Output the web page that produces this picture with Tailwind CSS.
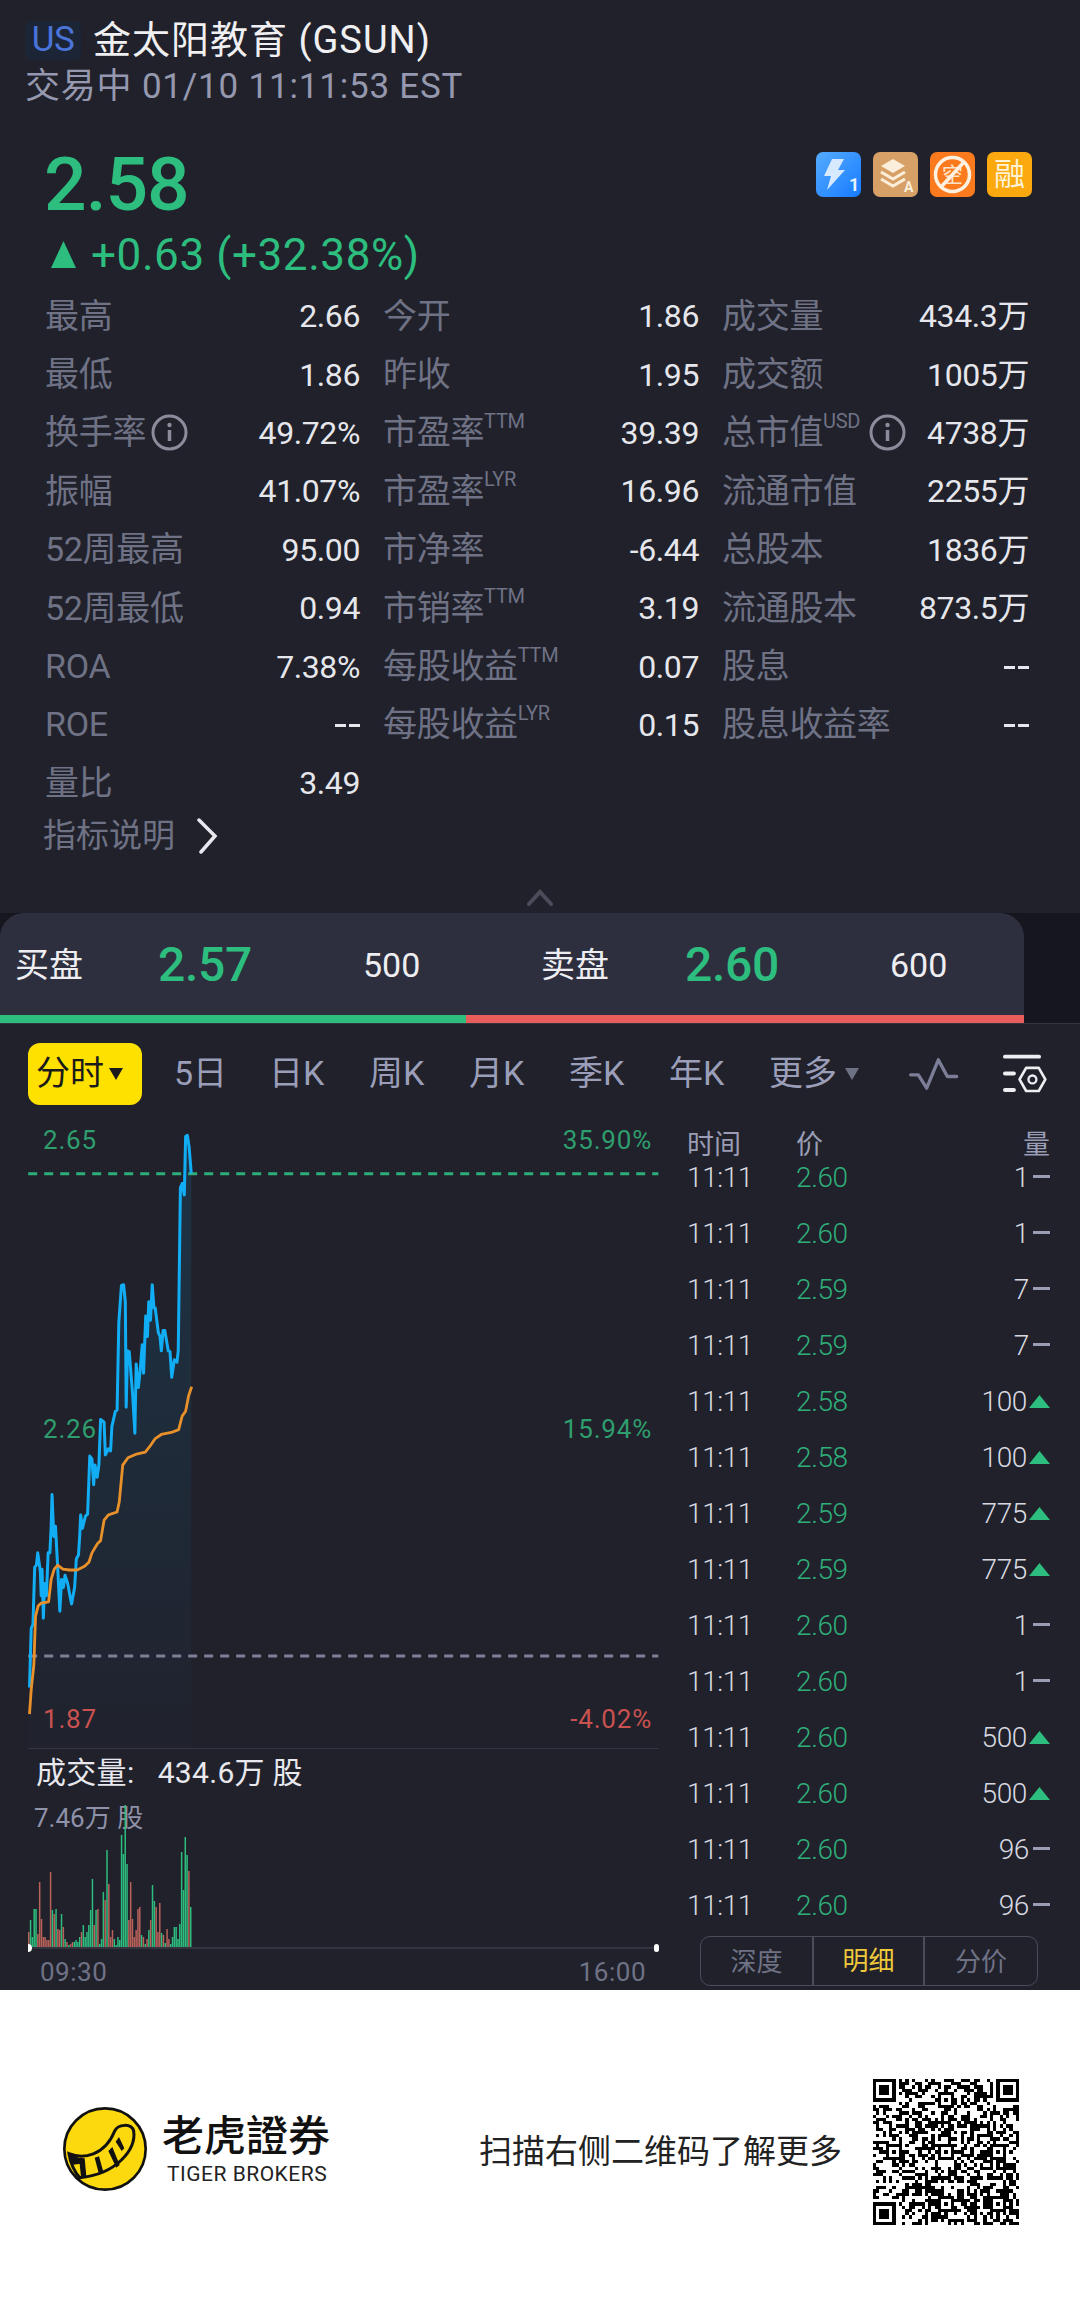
<!DOCTYPE html>
<html lang="zh">
<head>
  <meta charset="UTF-8" />
  <meta name="viewport" content="width=device-width, initial-scale=1.0"/>
  <title>金太阳教育 (GSUN)</title>
  <script src="https://cdn.jsdelivr.net/npm/@tailwindcss/browser@4"></script>
</head>
<body class="w-[1080px] h-[2313px] overflow-hidden bg-[#20212b] font-['Roboto','Noto_Sans_CJK_SC',sans-serif]">

  <!-- Header -->
  <header class="h-[130px] pt-[21px] pl-[25px]">
    <div class="flex items-center h-[39px]">
      <span class="w-[56px] h-[39px] flex items-center justify-center rounded-[6px] bg-[#1c2536] text-[#4a74d9] text-[35px] tracking-[-0.5px]">US</span>
      <span class="ml-[12px] text-[38px] tracking-[1px] text-[#f0f0f2]">金太阳教育 (GSUN)</span>
    </div>
    <div class="mt-[7px] text-[35px] leading-[40px] tracking-[0.8px] text-[#9598ae]">交易中 01/10 11:11:53 EST</div>
  </header>

  <!-- Price -->
  <section class="h-[157px] pl-[44px] pr-[48px] flex justify-between">
    <div class="text-[#2dbd7e]">
      <div class="text-[75px] leading-[84px] mt-[12px] font-medium tracking-[-1px]">2.58</div>
      <div class="flex items-center mt-[4px] h-[50px]">
        <svg width="27" height="28" viewBox="0 0 27 28" class="ml-[6px]"><path d="M13.500 0 L26 27 L1 27 Z" fill="#2dbd7e"/></svg>
        <span class="ml-[14px] text-[44px] tracking-[0.6px]">+0.63 (+32.38%)</span>
      </div>
    </div>
    <div class="flex gap-[12px] mt-[22px] h-[45px]">
      <svg width="45" height="45" viewBox="0 0 45 45"><defs><linearGradient id="tileBlue" x1="0" y1="0" x2="1" y2="1"><stop offset="0" stop-color="#55acff"/><stop offset="1" stop-color="#167aff"/></linearGradient></defs><rect width="45" height="45" rx="7" fill="url(#tileBlue)"/><path d="M16 7 L28 7 L22 18 L29 18 L11 38 L15 24 L8 24 Z" fill="#d6e9ff"/><text x="33" y="39" font-size="18" font-weight="700" fill="#e6f2ff" font-family="Roboto">1</text></svg>
      <svg width="45" height="45" viewBox="0 0 45 45"><rect width="45" height="45" rx="7" fill="#d6a066"/><path d="M20 7 L32 14 L20 21 L8 14 Z" fill="#fbeeda"/><path d="M8 20 L20 27 L32 20 M8 27 L20 34 L32 27" fill="none" stroke="#fbeeda" stroke-width="3"/><text x="31" y="40" font-size="14" font-weight="700" fill="#fbeeda" font-family="Roboto">A</text></svg>
      <svg width="45" height="45" viewBox="0 0 45 45"><rect width="45" height="45" rx="7" fill="#fb7a1e"/><text x="22.500" y="30" font-size="21" text-anchor="middle" fill="#fde3c8" font-family="Noto Sans CJK SC">空</text><circle cx="22.500" cy="22.500" r="17" fill="none" stroke="#fff1e0" stroke-width="3.500"/><path d="M11 35 L34 10" stroke="#fff1e0" stroke-width="3.500"/></svg>
      <div class="w-[45px] h-[45px] rounded-[7px] bg-[#fba90f] text-[#fff3d6] text-[31px] leading-[45px] text-center">融</div>
    </div>
  </section>

  <!-- Stats -->
  <section id="stats" class="pl-[45px] grid grid-cols-[315px_316px_307px] gap-x-[23px] auto-rows-[58.4px] h-[525px]"></section>

  <div class="h-[48px] pl-[43px] flex items-center">
    <span class="text-[33px] text-[#6f7285]">指标说明</span>
    <svg width="24" height="36" viewBox="0 0 24 36" class="ml-[20px]"><path d="M4 2 L20 18 L6 34" fill="none" stroke="#e8e8ee" stroke-width="3.500" stroke-linecap="round"/></svg>
  </div>

  <!-- Collapse arrow -->
  <div class="h-[53px] flex justify-center items-end pb-[7px]">
    <svg width="28" height="17" viewBox="0 0 28 17"><path d="M3 15 L14 3 L25 15" fill="none" stroke="#4a4c5a" stroke-width="4" stroke-linecap="round"/></svg>
  </div>

  <!-- Bid / ask -->
  <section class="h-[110px] bg-[#15161e] flex">
    <div class="w-[1024px] rounded-t-[24px] bg-[#2d2f3e] flex flex-col">
      <div class="flex-1 pt-[2px] flex items-center text-[#eeeef2] text-[34px]">
        <span class="ml-[15px] w-[143px]">买盘</span>
        <span class="w-[205px] text-[48px] font-medium text-[#2dbd7e] tracking-[-0.3px]">2.57</span>
        <span class="w-[178px]">500</span>
        <span class="w-[144px]">卖盘</span>
        <span class="w-[205px] text-[48px] font-medium text-[#2dbd7e] tracking-[-0.3px]">2.60</span>
        <span>600</span>
      </div>
      <div class="h-[8px] flex">
        <div class="w-[466px] bg-[#2dbd7e]"></div>
        <div class="flex-1 bg-[#e85c5c]"></div>
      </div>
    </div>
  </section>

  <!-- Period tabs -->
  <nav class="h-[87px] pt-[13px] border-t border-[#33343f] flex items-center pl-[28px] text-[34px] text-[#9b9eb8]">
    <div class="w-[114px] h-[62px] rounded-[12px] bg-[#ffe100] text-[#1a1a1a] flex items-center pl-[8px]">
      分时
      <svg width="14" height="12" viewBox="0 0 14 12" class="ml-[5px]"><path d="M0 0 H14 L7 12 Z" fill="#1a1a1a"/></svg>
    </div>
    <span class="ml-[32px] w-[95px]">5日</span>
    <span class="w-[100px]">日K</span>
    <span class="w-[100px]">周K</span>
    <span class="w-[100px]">月K</span>
    <span class="w-[100px]">季K</span>
    <span class="w-[100px]">年K</span>
    <span>更多</span>
    <svg width="14" height="12" viewBox="0 0 14 12" class="ml-[8px]"><path d="M0 0 H14 L7 12 Z" fill="#6f7285"/></svg>
    <svg width="50" height="32" viewBox="97 60 150 95" class="ml-[50px]"><path d="M102 110 H125 L150 150 L185 65 L212 115 H240" fill="none" stroke="#7b7e96" stroke-width="10" stroke-linecap="round" stroke-linejoin="round"/></svg>
    <svg width="47" height="43" viewBox="370 40 140 130" class="ml-[42px]"><path d="M381 54 H484 M381 105 H408 M381 155 H408" stroke="#eeeef2" stroke-width="12" stroke-linecap="round"/><path d="M425 123 L445 88 H483 L503 123 L483 158 H445 Z" fill="none" stroke="#eeeef2" stroke-width="8" stroke-linejoin="round"/><circle cx="464" cy="123" r="12" fill="none" stroke="#eeeef2" stroke-width="7"/></svg>
  </nav>

  <!-- Chart and trade ticks -->
  <main class="h-[880px] flex">
    <div class="w-[670px] shrink-0">
      <div class="relative h-[638px]">
        <svg width="680" height="640" viewBox="0 0 1568 1568" preserveAspectRatio="none" class="absolute left-0 top-0">
          <defs><linearGradient id="areaFill" x1="0" y1="0" x2="0" y2="1"><stop offset="0" stop-color="#0ea5e9" stop-opacity="0.14"/><stop offset="1" stop-color="#0ea5e9" stop-opacity="0.01"/></linearGradient></defs>
          <polygon id="area" fill="url(#areaFill)"/>
          <path d="M65 156 H1518" stroke="#2fae7a" stroke-width="3" stroke-dasharray="9 7" vector-effect="non-scaling-stroke"/>
          <path d="M65 1338 H1518" stroke="#7d7f96" stroke-width="3" stroke-dasharray="9 7" vector-effect="non-scaling-stroke"/>
          <polyline id="priceLine" fill="none" stroke="#12aef5" stroke-width="3" stroke-linejoin="round" vector-effect="non-scaling-stroke"/>
          <polyline points="68,1480 72,1420 78,1360 82,1240 88,1215 95,1208 112,1205 118,1150 125,1125 133,1115 145,1125 160,1127 178,1127 195,1118 205,1108 212,1085 225,1062 232,1055 240,1005 250,992 270,985 275,960 283,870 295,852 315,843 335,838 345,825 358,805 372,795 395,790 412,783 420,750 428,738 435,700 442,678" fill="none" stroke="#e8912a" stroke-width="2.800" stroke-linejoin="round" vector-effect="non-scaling-stroke"/>
        </svg>
        <span class="absolute left-[43px] top-[15px] text-[26px] leading-[30px] tracking-[0.8px] text-[#2f9e6e]">2.65</span>
        <span class="absolute right-[18px] top-[15px] text-[26px] leading-[30px] tracking-[0.8px] text-[#2f9e6e]">35.90%</span>
        <span class="absolute left-[43px] top-[304px] text-[26px] leading-[30px] tracking-[0.8px] text-[#2f9e6e]">2.26</span>
        <span class="absolute right-[18px] top-[304px] text-[26px] leading-[30px] tracking-[0.8px] text-[#2f9e6e]">15.94%</span>
        <span class="absolute left-[43px] top-[594px] text-[26px] leading-[30px] tracking-[0.8px] text-[#c9514f]">1.87</span>
        <span class="absolute right-[18px] top-[594px] text-[26px] leading-[30px] tracking-[0.8px] text-[#c9514f]">-4.02%</span>
      </div>

      <!-- Volume -->
      <div class="relative h-[242px] ml-[28px] w-[631px] border-t border-[#33343f]">
        <div class="pl-[8px] pt-[6px] text-[30px] leading-[36px] tracking-[0.3px] text-[#e8e8ee]">成交量:&nbsp;&nbsp;&nbsp;434.6万 股</div>
        <div class="pl-[6px] mt-[12px] text-[26px] leading-[30px] text-[#8f92a8]">7.46万 股</div>
        <svg id="volBars" width="165" height="145" class="absolute left-0 top-[54px]"></svg>
        <div class="absolute left-0 right-0 top-[198px] h-[2px] bg-[#33343f]"></div>
        <div class="absolute left-0 top-[195px] w-[4px] h-[8px] rounded-r-full bg-white"></div>
        <div class="absolute right-0 top-[195px] w-[5px] h-[8px] rounded-full bg-white"></div>
        <div class="absolute left-[12px] right-[13px] top-[208px] flex justify-between text-[26px] leading-[30px] tracking-[0.5px] text-[#6f7285]">
          <span>09:30</span><span>16:00</span>
        </div>
      </div>
    </div>

    <div class="flex-1 pt-[23px] flex flex-col">
      <div class="h-[25px] -mb-[8px] flex items-center pl-[17px] pr-[30px] text-[27px] text-[#9a9db5]">
        <span class="w-[109px]">时间</span>
        <span class="flex-1">价</span>
        <span>量</span>
      </div>
      <div id="ticks"></div>
      <div class="ml-[30px] mt-[2px] w-[338px] h-[50px] pt-[2px] rounded-[10px] border border-[#4a4c5a] flex text-[26px] text-[#6f7285]">
        <div class="w-[111px] flex items-center justify-center">深度</div>
        <div class="w-[113px] -mt-[2px] border-x-[2px] border-[#4a4c5a] flex items-center justify-center text-[#f0c93a]">明细</div>
        <div class="flex-1 flex items-center justify-center">分价</div>
      </div>
    </div>
  </main>

  <!-- Footer -->
  <footer class="h-[323px] bg-white flex items-center pl-[63px]">
    <svg width="84" height="84" viewBox="70 88 252 252" class="mb-[6px]">
      <circle cx="196" cy="214" r="122" fill="#fbd90e" stroke="#111" stroke-width="8"/>
      <path d="M88 228 C130 245 195 235 225 160 C235 140 275 135 282 160 C290 215 230 290 120 300 C105 285 92 255 88 228Z" fill="#fbd90e" stroke="#111" stroke-width="9"/>
      <path d="M88 230 L118 240 L122 258 L96 262 Z M118 240 L135 242 L140 296 L124 298 Z M165 240 L178 236 L192 286 L178 290 Z M206 220 L218 208 L240 262 L230 270 Z M228 192 L238 178 L254 212 L246 220 Z" fill="#111"/>
    </svg>
    <div class="ml-[15px] w-[317px] mb-[6px]">
      <div class="text-[42px] leading-[50px] font-medium text-[#111]">老虎證券</div>
      <div class="text-[21px] leading-[24px] tracking-[0.5px] text-[#222] ml-[5px]">TIGER BROKERS</div>
    </div>
    <span class="text-[33px] text-[#222]">扫描右侧二维码了解更多</span>
    <svg id="qr" width="146" height="146" viewBox="0 0 45 45" shape-rendering="crispEdges" class="ml-[31px]"></svg>
  </footer>

  <script>
    // stat cells: label, sup, info icon, value
    const stats = [
      ["最高","",0,"2.66"],["今开","",0,"1.86"],["成交量","",0,"434.3万"],
      ["最低","",0,"1.86"],["昨收","",0,"1.95"],["成交额","",0,"1005万"],
      ["换手率","",1,"49.72%"],["市盈率","TTM",0,"39.39"],["总市值","USD",2,"4738万"],
      ["振幅","",0,"41.07%"],["市盈率","LYR",0,"16.96"],["流通市值","",0,"2255万"],
      ["52周最高","",0,"95.00"],["市净率","",0,"-6.44"],["总股本","",0,"1836万"],
      ["52周最低","",0,"0.94"],["市销率","TTM",0,"3.19"],["流通股本","",0,"873.5万"],
      ["ROA","",0,"7.38%"],["每股收益","TTM",0,"0.07"],["股息","",0,"--"],
      ["ROE","",0,"--"],["每股收益","LYR",0,"0.15"],["股息收益率","",0,"--"],
      ["量比","",0,"3.49"]
    ];
    const infoIcon = m => `<svg width="37" height="37" viewBox="0 0 37 37" class="${m}"><circle cx="18.500" cy="18.500" r="16.500" fill="none" stroke="#8b8d9c" stroke-width="3"/><circle cx="18.500" cy="11" r="2.200" fill="#8b8d9c"/><path d="M18.500 16 V27" stroke="#8b8d9c" stroke-width="3.500"/></svg>`;
    document.getElementById("stats").innerHTML = stats.map(s => `
      <div class="flex items-center justify-between">
        <span class="flex items-center text-[34px] text-[#6f7285] tracking-[-0.3px] whitespace-nowrap">${s[0]}${s[1] ? `<sup class="text-[20px] leading-none top-[-12px]">${s[1]}</sup>` : ""}${s[2] === 1 ? infoIcon("ml-[5px]") : s[2] === 2 ? infoIcon("ml-[9px]") : ""}</span>
        ${s[3] === "--"
          ? `<span class="flex gap-[3px] mt-[2px]"><i class="w-[11px] h-[3px] bg-[#e6e7ec]"></i><i class="w-[11px] h-[3px] bg-[#e6e7ec]"></i></span>`
          : `<span class="text-[32px] text-[#e6e7ec] tracking-[-0.4px]">${s[3]}</span>`}
      </div>`).join("");

    // price line
    const pts = "68,1415 72,1270 76,1260 80,1120 84,1115 87,1085 93,1130 95,1190 97,1125 100,1245 103,1160 107,1190 111,1085 115,1085 118,1020 120,942 124,1045 128,1020 133,1120 138,1228 142,1150 146,1170 150,1140 156,1160 165,1210 172,1170 176,1100 181,1090 184,1040 186,992 190,1025 197,995 202,990 207,848 212,855 216,918 219,870 224,900 228,870 232,758 240,765 243,845 250,830 255,835 258,775 266,738 270,735 274,520 280,430 285,428 289,470 291,728 294,590 298,592 306,700 311,792 314,622 319,680 323,640 328,575 331,645 336,505 340,555 343,470 347,515 351,428 355,485 358,485 365,545 369,555 372,590 376,540 380,540 388,590 392,592 396,655 402,612 408,618 411,590 416,190 420,180 425,208 428,65 432,62 436,90 441,155";
    document.getElementById("priceLine").setAttribute("points", pts);
    document.getElementById("area").setAttribute("points", pts + " 441,1568 68,1568");

    // volume bars, heights in px, r = red
    const vols = [[15,"r"],[27,"g"],[10,"g"],[38,"g"],[38,"g"],[13,"r"],[65,"r"],[28,"r"],[10,"r"],[10,"r"],[7,"r"],[7,"r"],[75,"r"],[37,"g"],[33,"r"],[38,"g"],[18,"r"],[17,"r"],[33,"g"],[20,"r"],[8,"g"],[5,"r"],[2,"g"],[3,"r"],[5,"r"],[5,"g"],[7,"g"],[5,"g"],[10,"g"],[15,"r"],[22,"g"],[10,"g"],[15,"g"],[22,"g"],[37,"g"],[68,"g"],[22,"r"],[37,"g"],[38,"r"],[3,"g"],[8,"g"],[55,"g"],[47,"r"],[97,"g"],[63,"r"],[10,"r"],[17,"r"],[8,"g"],[2,"g"],[10,"g"],[7,"g"],[112,"g"],[93,"g"],[142,"g"],[83,"g"],[27,"r"],[65,"r"],[28,"r"],[10,"r"],[17,"r"],[38,"r"],[40,"r"],[12,"g"],[10,"r"],[3,"g"],[8,"r"],[17,"g"],[27,"r"],[62,"g"],[46,"g"],[40,"r"],[15,"r"],[44,"r"],[14,"g"],[12,"r"],[4,"g"],[18,"r"],[8,"r"],[3,"g"],[10,"g"],[20,"g"],[20,"g"],[8,"g"],[23,"g"],[95,"g"],[57,"g"],[110,"g"],[92,"g"],[76,"r"],[40,"g"]];
    document.getElementById("volBars").innerHTML = vols.map((v, i) =>
      `<rect x="${i * 1.82}" y="${144 - v[0]}" width="1.500" height="${v[0]}" fill="${v[1] === "g" ? "#2dbd7e" : "#b8625a"}"/>`).join("");

    // trade ticks
    const ticks = [["2.60","1",0],["2.60","1",0],["2.59","7",0],["2.59","7",0],["2.58","100",1],["2.58","100",1],["2.59","775",1],["2.59","775",1],["2.60","1",0],["2.60","1",0],["2.60","500",1],["2.60","500",1],["2.60","96",0],["2.60","96",0]];
    document.getElementById("ticks").innerHTML = ticks.map(t => `
      <div class="h-[56px] flex items-center pl-[17px] pr-[30px] text-[28px] font-light">
        <span class="w-[109px] text-[#d8d9e0] tracking-[-0.4px]">11:11</span>
        <span class="flex-1 text-[#2fae7a] tracking-[-0.4px]">${t[0]}</span>
        <span class="text-[#d8d9e0] tracking-[-0.4px]">${t[1]}</span>
        ${t[2]
          ? `<svg width="21" height="13" viewBox="0 0 21 13" class="ml-[2px] mb-[2px]"><path d="M10.500 0 L21 13 H0 Z" fill="#2dbd7e"/></svg>`
          : `<span class="ml-[4px] w-[17px] h-[3px] mb-[4px] bg-[#9a9db5]"></span>`}
      </div>`).join("");

    // QR, version 7 layout with noise data
    let seed = 20240110;
    const rnd = () => (seed = (seed * 1664525 + 1013904223) % 4294967296) / 4294967296;
    const n = 45;
    const grid = Array.from({ length: n }, () => Array.from({ length: n }, () => rnd() > 0.5));
    const finder = (ox, oy) => {
      for (let y = -1; y < 8; y++) for (let x = -1; x < 8; x++) {
        if (ox + x < 0 || oy + y < 0 || ox + x >= n || oy + y >= n) continue;
        const ring = x >= 0 && x < 7 && y >= 0 && y < 7 && (x === 0 || x === 6 || y === 0 || y === 6);
        const core = x >= 2 && x <= 4 && y >= 2 && y <= 4;
        grid[oy + y][ox + x] = ring || core;
      }
    };
    const align = (cx, cy) => {
      for (let y = -2; y <= 2; y++) for (let x = -2; x <= 2; x++)
        grid[cy + y][cx + x] = Math.max(Math.abs(x), Math.abs(y)) !== 1;
    };
    [[22,6],[6,22],[22,22],[38,22],[22,38],[38,38]].forEach(c => align(c[0], c[1]));
    finder(0, 0); finder(38, 0); finder(0, 38);
    let rects = "";
    grid.forEach((row, y) => row.forEach((on, x) => { if (on) rects += `<rect x="${x}" y="${y}" width="1" height="1"/>`; }));
    document.getElementById("qr").innerHTML = rects;
  </script>
</body>
</html>
